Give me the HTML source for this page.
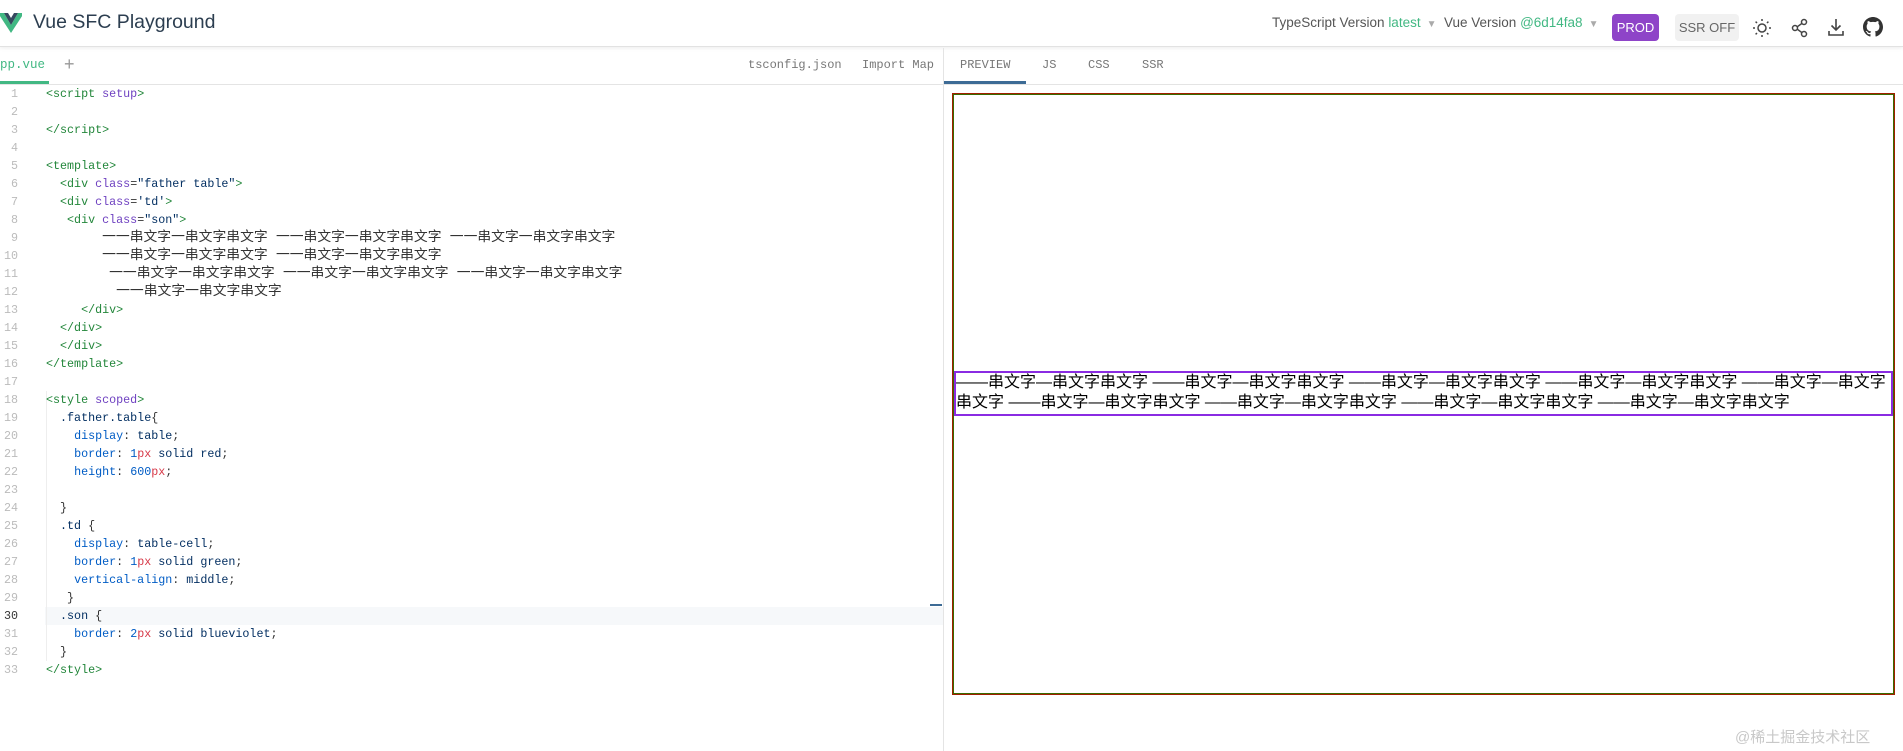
<!DOCTYPE html>
<html><head><meta charset="utf-8"><style>
*{margin:0;padding:0;box-sizing:border-box}
body{width:1903px;height:751px;background:#fff;font-family:"Liberation Sans","Noto Sans CJK SC",sans-serif;position:relative;overflow:hidden;color:#333}
.hdr{position:absolute;left:0;top:0;width:1903px;height:47px;border-bottom:1px solid #e2e2e2;box-shadow:0 1px 4px rgba(0,0,0,.08)}
.title{position:absolute;left:33px;top:11px;font-size:19.5px;color:#2c3e50}
.ri{position:absolute;top:15px;font-size:13.5px;color:#555}
.ri b{font-weight:normal;color:#42b883}
.car{color:#aaa;font-size:10px;margin-left:6px}
.mono{font-family:"Liberation Mono","Noto Sans CJK SC",monospace}
.tab{position:absolute;font-size:12px;color:#777}
.code{position:absolute;left:0;top:85px;font-size:11.7px;line-height:18px;white-space:pre}
.ln{position:absolute;left:0;width:18px;text-align:right;color:#bbb}
.tx{position:absolute;left:46px;color:#333}
.cj{font-size:13.8px}
.t{color:#22863a}.a{color:#6f42c1}.s{color:#032f62}.p{color:#005cc5}.r{color:#d73a49}.v{color:#032f62}
</style></head><body>
<div class="hdr">
<svg style="position:absolute;left:0;top:12px" width="22" height="22" viewBox="0 0 22 22"><path d="M-2 1h6l7 12 7-12h6L11 21z" fill="#41b883"/><path d="M4 1h4l3 5 3-5h4L11 13z" fill="#35495e"/></svg>
<div class="title">Vue SFC Playground</div>
<div class="ri" style="left:1272px">TypeScript Version <b>latest</b><span class="car">▼</span></div>
<div class="ri" style="left:1444px">Vue Version <b>@6d14fa8</b><span class="car">▼</span></div>
<div style="position:absolute;left:1612px;top:14px;width:47px;height:27px;background:#8e44c8;border-radius:4px;color:#fff;font-size:13px;text-align:center;line-height:27px">PROD</div>
<div style="position:absolute;left:1675px;top:14px;width:64px;height:27px;background:#f1f1f1;border-radius:4px;color:#666;font-size:13px;text-align:center;line-height:27px">SSR OFF</div>
<svg style="position:absolute;left:1752px;top:18px" width="20" height="20" viewBox="0 0 20 20" fill="none" stroke="#444" stroke-width="1.5"><circle cx="10" cy="10" r="4"/><path d="M10 1v2M10 17v2M1 10h2M17 10h2M3.6 3.6l1.4 1.4M15 15l1.4 1.4M3.6 16.4L5 15M15 5l1.4-1.4"/></svg>
<svg style="position:absolute;left:1790px;top:18px" width="20" height="20" viewBox="0 0 20 20" fill="none" stroke="#444" stroke-width="1.5"><circle cx="14" cy="4" r="2.5"/><circle cx="5" cy="10" r="2.5"/><circle cx="14" cy="16" r="2.5"/><path d="M7.2 8.8l4.6-3.3M7.2 11.2l4.6 3.3"/></svg>
<svg style="position:absolute;left:1826px;top:17px" width="20" height="20" viewBox="0 0 20 20" fill="none" stroke="#444" stroke-width="1.6"><path d="M10 2v11M5.5 8.5L10 13l4.5-4.5M3 14v4h14v-4"/></svg>
<svg style="position:absolute;left:1863px;top:17px" width="20" height="20" viewBox="0 0 16 16"><path fill="#333" d="M8 0C3.58 0 0 3.58 0 8c0 3.54 2.290 6.530 5.470 7.590.4.07.55-.17.55-.38 0-.19-.01-.82-.01-1.490-2.010.37-2.530-.49-2.690-.94-.09-.23-.48-.94-.82-1.130-.28-.15-.68-.52-.01-.53.63-.01 1.080.58 1.230.82.72 1.210 1.870.87 2.330.66.07-.52.28-.87.51-1.070-1.780-.2-3.640-.89-3.640-3.950 0-.87.31-1.590.82-2.150-.08-.2-.36-1.020.08-2.120 0 0 .67-.21 2.200.82.64-.18 1.320-.27 2-.27.68 0 1.360.09 2 .27 1.530-1.040 2.200-.82 2.200-.82.44 1.100.16 1.920.08 2.120.51.56.82 1.270.82 2.150 0 3.070-1.870 3.750-3.650 3.950.29.25.54.73.54 1.480 0 1.070-.01 1.930-.01 2.200 0 .21.15.46.55.38A8.013 8.013 0 0016 8c0-4.420-3.580-8-8-8z"/></svg>
</div>
<div style="position:absolute;left:0;top:84px;width:1903px;height:1px;background:#e4e4e4"></div>
<div style="position:absolute;left:943px;top:48px;width:1px;height:703px;background:#e4e4e4"></div>
<div class="tab mono" style="left:0;top:58px;color:#42b883;font-size:12.5px">pp.vue</div>
<div style="position:absolute;left:0;top:81px;width:49px;height:3px;background:#42b883"></div>
<div class="tab" style="left:64px;top:54px;font-size:18px;color:#999">+</div>
<div class="tab mono" style="left:748px;top:58px">tsconfig.json</div>
<div class="tab mono" style="left:862px;top:58px">Import Map</div>
<div class="tab mono" style="left:960px;top:58px">PREVIEW</div>
<div class="tab mono" style="left:1042px;top:58px">JS</div>
<div class="tab mono" style="left:1088px;top:58px">CSS</div>
<div class="tab mono" style="left:1142px;top:58px">SSR</div>
<div style="position:absolute;left:944px;top:81px;width:82px;height:3px;background:#3d6b95"></div>
<div style="position:absolute;left:45px;top:607px;width:898px;height:18px;background:#f6f8fa"></div>
<div style="position:absolute;left:930px;top:604px;width:12px;height:2px;background:#3d6b95"></div>
<div style="position:absolute;left:46px;top:391px;width:1px;height:270px;background:#eee"></div>
<div class="code mono">
<div class="ln" style="top:0">1</div><div class="tx" style="top:0"><span class="t">&lt;script</span> <span class="a">setup</span><span class="t">&gt;</span></div>
<div class="ln" style="top:18px">2</div>
<div class="ln" style="top:36px">3</div><div class="tx" style="top:36px"><span class="t">&lt;/script&gt;</span></div>
<div class="ln" style="top:54px">4</div>
<div class="ln" style="top:72px">5</div><div class="tx" style="top:72px"><span class="t">&lt;template&gt;</span></div>
<div class="ln" style="top:90px">6</div><div class="tx" style="top:90px">  <span class="t">&lt;div</span> <span class="a">class</span>=<span class="s">"father table"</span><span class="t">&gt;</span></div>
<div class="ln" style="top:108px">7</div><div class="tx" style="top:108px">  <span class="t">&lt;div</span> <span class="a">class</span>=<span class="s">'td'</span><span class="t">&gt;</span></div>
<div class="ln" style="top:126px">8</div><div class="tx" style="top:126px">   <span class="t">&lt;div</span> <span class="a">class</span>=<span class="s">"son"</span><span class="t">&gt;</span></div>
<div class="ln" style="top:144px">9</div><div class="tx" style="top:144px">        <span class="cj">一一串文字一串文字串文字 一一串文字一串文字串文字 一一串文字一串文字串文字</span></div>
<div class="ln" style="top:162px">10</div><div class="tx" style="top:162px">        <span class="cj">一一串文字一串文字串文字 一一串文字一串文字串文字</span></div>
<div class="ln" style="top:180px">11</div><div class="tx" style="top:180px">         <span class="cj">一一串文字一串文字串文字 一一串文字一串文字串文字 一一串文字一串文字串文字</span></div>
<div class="ln" style="top:198px">12</div><div class="tx" style="top:198px">          <span class="cj">一一串文字一串文字串文字</span></div>
<div class="ln" style="top:216px">13</div><div class="tx" style="top:216px">     <span class="t">&lt;/div&gt;</span></div>
<div class="ln" style="top:234px">14</div><div class="tx" style="top:234px">  <span class="t">&lt;/div&gt;</span></div>
<div class="ln" style="top:252px">15</div><div class="tx" style="top:252px">  <span class="t">&lt;/div&gt;</span></div>
<div class="ln" style="top:270px">16</div><div class="tx" style="top:270px"><span class="t">&lt;/template&gt;</span></div>
<div class="ln" style="top:288px">17</div>
<div class="ln" style="top:306px">18</div><div class="tx" style="top:306px"><span class="t">&lt;style</span> <span class="a">scoped</span><span class="t">&gt;</span></div>
<div class="ln" style="top:324px">19</div><div class="tx" style="top:324px">  <span class="v">.father.table</span>{</div>
<div class="ln" style="top:342px">20</div><div class="tx" style="top:342px">    <span class="p">display</span>: <span class="v">table</span>;</div>
<div class="ln" style="top:360px">21</div><div class="tx" style="top:360px">    <span class="p">border</span>: <span class="p">1</span><span class="r">px</span> <span class="v">solid red</span>;</div>
<div class="ln" style="top:378px">22</div><div class="tx" style="top:378px">    <span class="p">height</span>: <span class="p">600</span><span class="r">px</span>;</div>
<div class="ln" style="top:396px">23</div>
<div class="ln" style="top:414px">24</div><div class="tx" style="top:414px">  }</div>
<div class="ln" style="top:432px">25</div><div class="tx" style="top:432px">  <span class="v">.td</span> {</div>
<div class="ln" style="top:450px">26</div><div class="tx" style="top:450px">    <span class="p">display</span>: <span class="v">table-cell</span>;</div>
<div class="ln" style="top:468px">27</div><div class="tx" style="top:468px">    <span class="p">border</span>: <span class="p">1</span><span class="r">px</span> <span class="v">solid green</span>;</div>
<div class="ln" style="top:486px">28</div><div class="tx" style="top:486px">    <span class="p">vertical-align</span>: <span class="v">middle</span>;</div>
<div class="ln" style="top:504px">29</div><div class="tx" style="top:504px">   }</div>
<div class="ln" style="top:522px;color:#333">30</div><div class="tx" style="top:522px">  <span class="v">.son</span> {</div>
<div class="ln" style="top:540px">31</div><div class="tx" style="top:540px">    <span class="p">border</span>: <span class="p">2</span><span class="r">px</span> <span class="v">solid blueviolet</span>;</div>
<div class="ln" style="top:558px">32</div><div class="tx" style="top:558px">  }</div>
<div class="ln" style="top:576px">33</div><div class="tx" style="top:576px"><span class="t">&lt;/style&gt;</span></div>
</div>
<div style="position:absolute;left:952px;top:93px;width:943px;height:602px;border:1px solid #a02000">
 <div style="position:absolute;inset:0;border:1px solid #3a6a00"></div>
 <div style="position:absolute;left:1px;top:277px;width:939px;height:45px;border:2px solid blueviolet;font-size:16px;line-height:20px;white-space:nowrap;overflow:hidden;color:#000;letter-spacing:0">——串文字—串文字串文字 ——串文字—串文字串文字 ——串文字—串文字串文字 ——串文字—串文字串文字 ——串文字—串文字<br>串文字 ——串文字—串文字串文字 ——串文字—串文字串文字 ——串文字—串文字串文字 ——串文字—串文字串文字</div>
</div>
<div style="position:absolute;left:1735px;top:726px;font-size:15px;color:#c8c8c8">@稀土掘金技术社区</div>
</body></html>
